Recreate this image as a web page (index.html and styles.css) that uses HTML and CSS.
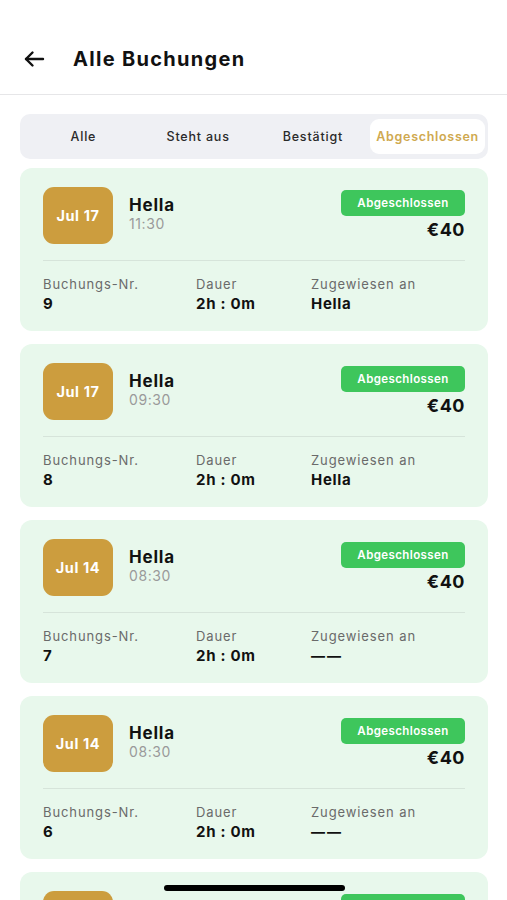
FILE: index.html
```html
<!DOCTYPE html>
<html lang="de">
<head>
<meta charset="utf-8">
<title>Alle Buchungen</title>
<link rel="stylesheet" href="styles.css">
</head>
<body>
<div class="screen">
  <header class="topbar">
    <svg class="back" width="22" height="18" viewBox="0 0 22 18" fill="none" stroke="#111" stroke-width="2.4" stroke-linecap="round" stroke-linejoin="round"><path d="M20 9H3"/><path d="M9.5 2.5L3 9l6.5 6.5"/></svg>
    <h1 class="title">Alle Buchungen</h1>
  </header>
  <div class="tabs">
    <div class="tab">Alle</div>
    <div class="tab">Steht aus</div>
    <div class="tab">Bestätigt</div>
    <div class="tab active">Abgeschlossen</div>
  </div>
  <div class="list">
    <div class="card">
      <div class="card-top">
        <div class="date">Jul 17</div>
        <div class="who"><div class="name">Hella</div><div class="time">11:30</div></div>
        <div class="right"><span class="badge">Abgeschlossen</span><span class="price">€40</span></div>
      </div>
      <div class="details">
        <div class="col c1"><span class="lbl">Buchungs-Nr.</span><span class="val">9</span></div>
        <div class="col c2"><span class="lbl">Dauer</span><span class="val">2h : 0m</span></div>
        <div class="col c3"><span class="lbl">Zugewiesen an</span><span class="val">Hella</span></div>
      </div>
    </div>
    <div class="card">
      <div class="card-top">
        <div class="date">Jul 17</div>
        <div class="who"><div class="name">Hella</div><div class="time">09:30</div></div>
        <div class="right"><span class="badge">Abgeschlossen</span><span class="price">€40</span></div>
      </div>
      <div class="details">
        <div class="col c1"><span class="lbl">Buchungs-Nr.</span><span class="val">8</span></div>
        <div class="col c2"><span class="lbl">Dauer</span><span class="val">2h : 0m</span></div>
        <div class="col c3"><span class="lbl">Zugewiesen an</span><span class="val">Hella</span></div>
      </div>
    </div>
    <div class="card">
      <div class="card-top">
        <div class="date">Jul 14</div>
        <div class="who"><div class="name">Hella</div><div class="time">08:30</div></div>
        <div class="right"><span class="badge">Abgeschlossen</span><span class="price">€40</span></div>
      </div>
      <div class="details">
        <div class="col c1"><span class="lbl">Buchungs-Nr.</span><span class="val">7</span></div>
        <div class="col c2"><span class="lbl">Dauer</span><span class="val">2h : 0m</span></div>
        <div class="col c3"><span class="lbl">Zugewiesen an</span><span class="val dash">——</span></div>
      </div>
    </div>
    <div class="card">
      <div class="card-top">
        <div class="date">Jul 14</div>
        <div class="who"><div class="name">Hella</div><div class="time">08:30</div></div>
        <div class="right"><span class="badge">Abgeschlossen</span><span class="price">€40</span></div>
      </div>
      <div class="details">
        <div class="col c1"><span class="lbl">Buchungs-Nr.</span><span class="val">6</span></div>
        <div class="col c2"><span class="lbl">Dauer</span><span class="val">2h : 0m</span></div>
        <div class="col c3"><span class="lbl">Zugewiesen an</span><span class="val dash">——</span></div>
      </div>
    </div>
    <div class="card">
      <div class="card-top">
        <div class="date">Jul 14</div>
        <div class="who"><div class="name">Hella</div><div class="time">08:30</div></div>
        <div class="right"><span class="badge">Abgeschlossen</span><span class="price">€40</span></div>
      </div>
    </div>
  </div>
  <div class="home-indicator"></div>
</div>
</body>
</html>
```
FILE: styles.css
```css
* { box-sizing: border-box; }
html, body { margin: 0; padding: 0; }
body {
  background: #ffffff;
  font-family: "Inter", "Noto Sans", "Liberation Sans", sans-serif;
  color: #111;
  width: 507px;
  height: 900px;
  overflow: hidden;
}
.screen { position: relative; width: 507px; height: 900px; overflow: hidden; }
.topbar {
  height: 95px;
  padding-top: 40px;
  display: flex;
  align-items: flex-start;
  border-bottom: 1.5px solid #e6e6e8;
}
.back { margin: 10px 0 0 23px; }
.title {
  margin: 6px 0 0 28px;
  font-size: 20px;
  font-weight: 700;
  letter-spacing: 1.3px;
  line-height: 26px;
}
.tabs {
  margin: 19px 19px 0 20px;
  height: 45px;
  background: #eff0f4;
  border-radius: 10px;
  padding: 5px 3px 5px 6px;
  display: grid;
  grid-template-columns: repeat(4, 1fr);
}
.tab {
  display: flex;
  align-items: center;
  justify-content: center;
  font-size: 12.5px;
  font-weight: 500;
  letter-spacing: 0.8px;
  color: #2a2a2a;
  border-radius: 9px;
}
.tab.active {
  background: #fff;
  color: #cfa94f;
  font-weight: 600;
  letter-spacing: 0.7px;
}
.list {
  margin: 9px 19px 0 20px;
  display: flex;
  flex-direction: column;
  gap: 13px;
}
.card {
  background: #e8f8ec;
  border-radius: 12px;
  padding: 19px 23px 0 23px;
  height: 163px;
}
.card-top {
  display: flex;
  align-items: flex-start;
  height: 74px;
  border-bottom: 1px solid #d6e4da;
}
.date {
  width: 70px;
  height: 57px;
  background: #cc9d3e;
  border-radius: 11px;
  color: #fff;
  font-weight: 700;
  font-size: 14.5px;
  letter-spacing: 0.6px;
  display: flex;
  align-items: center;
  justify-content: center;
}
.who { margin-left: 16px; margin-top: 8px; }
.name { font-size: 17px; font-weight: 700; line-height: 20px; letter-spacing: 0.8px; }
.time { font-size: 14px; color: #9a9a9a; line-height: 18px; letter-spacing: 0.6px; }
.right {
  margin-left: auto;
  margin-top: 3px;
  display: flex;
  flex-direction: column;
  align-items: flex-end;
}
.badge {
  width: 124px;
  height: 26px;
  border-radius: 5px;
  background: #3ec65c;
  color: #fff;
  font-size: 11.5px;
  font-weight: 600;
  letter-spacing: 0.4px;
  display: flex;
  align-items: center;
  justify-content: center;
}
.price {
  margin-top: 3px;
  font-size: 18px;
  font-weight: 700;
  line-height: 22px;
  letter-spacing: 0.5px;
}
.details {
  display: flex;
  padding-top: 15px;
}
.col { display: flex; flex-direction: column; }
.c1 { width: 153px; }
.c2 { width: 115px; }
.lbl { font-size: 13px; color: #6a6a6a; line-height: 17px; letter-spacing: 0.9px; }
.val { font-size: 15px; font-weight: 700; line-height: 19px; margin-top: 1px; letter-spacing: 0.7px; }
.val.dash { letter-spacing: 2px; font-size: 14px; }
.home-indicator {
  position: absolute;
  left: 164px;
  top: 885px;
  width: 181px;
  height: 6px;
  background: #000;
  border-radius: 3px;
}
```
